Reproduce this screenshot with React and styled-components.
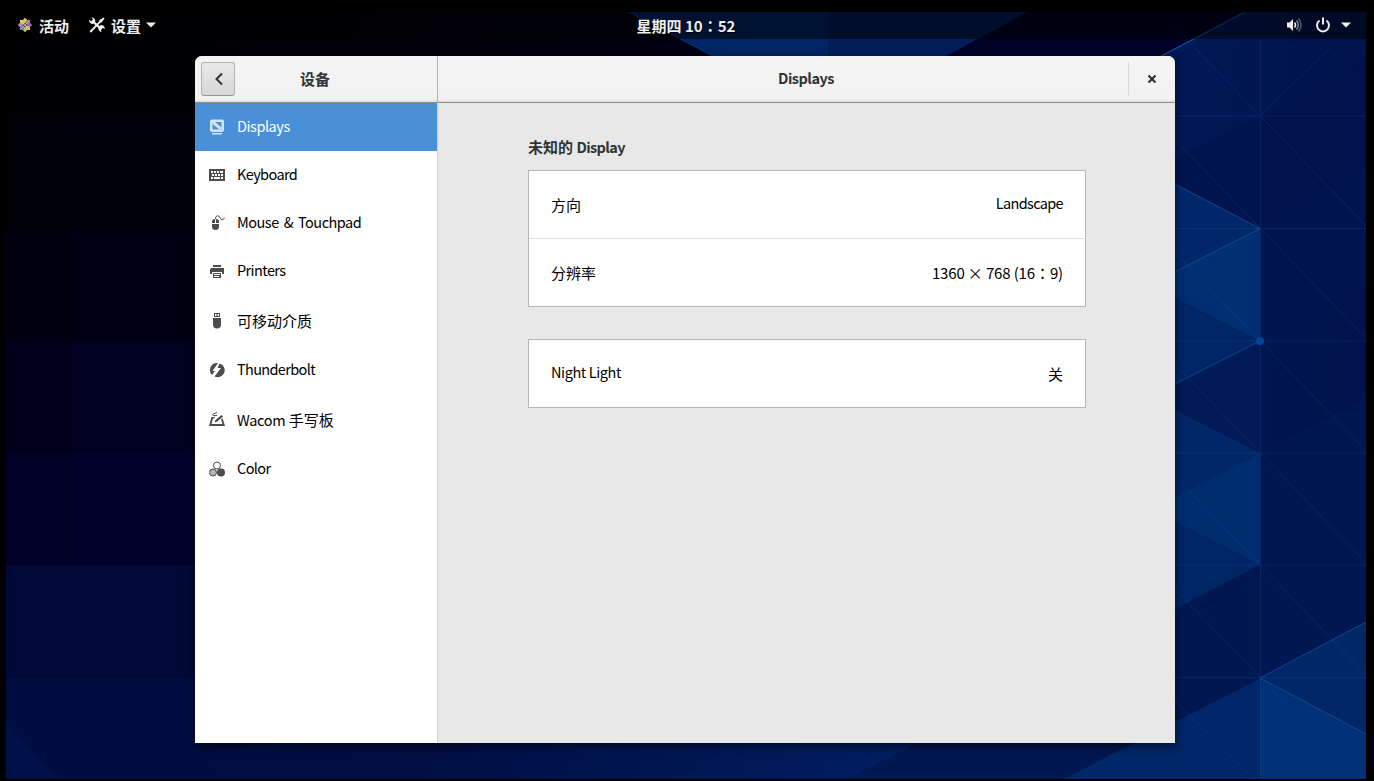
import React, { useState } from 'react';
import styled, { createGlobalStyle } from 'styled-components';

const GlobalStyle = createGlobalStyle`
  body {
    margin: 0;
    background: #000;
    overflow: hidden;
  }
`;

const Screen = styled.div`
  box-sizing: border-box;
  width: 1374px;
  height: 781px;
  padding: 12px 8px 2px 6px;
  background: #000;
  font-family: 'Noto Sans CJK SC', sans-serif;
  font-size: 15px;
  line-height: 22px;
  color: #000;
`;

const Desktop = styled.div`
  position: relative;
  width: 1360px;
  height: 767px;
  overflow: hidden;
`;

const WallpaperSvg = styled.svg`
  position: absolute;
  inset: 0;
  z-index: 0;
`;

const TopBar = styled.header`
  position: relative;
  box-sizing: border-box;
  display: grid;
  grid-template-columns: 1fr auto 1fr;
  align-items: center;
  height: 27px;
  padding: 0 15px 2px 11px;
  background: rgba(0, 0, 0, 0.5);
  color: #eee;
  font-weight: 700;
`;

const BarGroup = styled.div`
  display: flex;
  align-items: center;
  gap: 19px;
`;

const StatusGroup = styled.div`
  display: flex;
  align-items: center;
  justify-content: flex-end;
  gap: 10px;

  svg:first-child {
    margin-right: 3px;
  }
`;

const BarItem = styled.span`
  display: flex;
  align-items: center;
  gap: 6px;

  svg:last-child:not(:first-child) {
    margin: 1px 0 0 -1px;
  }
`;

const BarText = styled.span`
  padding-top: 2px;
`;

const Clock = styled.span`
  padding: 2px 0 0 4px;
  text-shadow: 0 1px 2px #000;
  white-space: pre;
`;

// the TC face centres the full-width colon in its cell
const Colon = styled.span`
  font-family: 'Noto Sans CJK TC', sans-serif;
`;

const Latin = styled.span`
  font-size: 14.5px;
  letter-spacing: ${(p) => p.$spacing || 0}px;
  word-spacing: ${(p) => p.$word || 0}px;
`;

const Window = styled.main`
  position: relative;
  display: grid;
  grid-template-columns: 243px 1fr;
  grid-template-rows: 47px 1fr;
  width: 980px;
  height: 687px;
  margin: 17px 0 0 189px;
  border-radius: 7px 7px 0 0;
  background: #e8e8e8;
  box-shadow: 0 3px 9px 1px rgba(0, 0, 0, 0.5);
`;

const HeaderPart = styled.div`
  box-sizing: border-box;
  display: grid;
  grid-template-columns: ${(p) => p.$columns};
  align-items: center;
  padding: 0 ${(p) => p.$right || 0}px 1px ${(p) => p.$left || 0}px;
  border-bottom: 1px solid #8f9088;
  border-right: ${(p) => (p.$divided ? '1px solid #b3b3ad' : 'none')};
  border-radius: ${(p) => (p.$divided ? '7px 0 0 0' : '0 7px 0 0')};
  background: linear-gradient(#f4f4f4, #f2f2f2 43px, #dededc);
`;

const Title = styled.h1`
  margin: 0;
  padding-bottom: ${(p) => (p.$latin ? 2 : 0)}px;
  font-size: 15px;
  font-weight: 700;
  color: #2e3436;
  text-align: center;
`;

const BackButton = styled.button`
  display: flex;
  align-items: center;
  justify-content: center;
  width: 34px;
  height: 34px;
  padding: 0 0 0 1px;
  border: 1px solid #b2b2ae;
  border-bottom-color: #96968f;
  border-radius: 3px;
  background: linear-gradient(#e9e9e9, #d7d7d7);
`;

const CloseButton = styled.button`
  display: flex;
  align-items: center;
  justify-content: center;
  height: 34px;
  padding: 0;
  border: 0;
  border-left: 1px solid #dadada;
  background: none;
`;

const Sidebar = styled.nav`
  border-right: 1px solid #d0d0cd;
  background: #fff;
`;

const SidebarRow = styled.div`
  box-sizing: border-box;
  display: flex;
  align-items: center;
  gap: 12px;
  height: ${(p) => (p.$tall ? 51 : 48)}px;
  padding-left: 14px;
  background: ${(p) => (p.$active ? '#4a90d9' : 'transparent')};
  color: ${(p) => (p.$active ? '#fff' : '#000')};
  cursor: default;

  svg {
    color: ${(p) => (p.$active ? '#d3e5f7' : '#4b4d4d')};
  }
`;

const RowLabel = styled.span`
  padding-bottom: ${(p) => (p.$tall ? 0 : 2)}px;
  white-space: nowrap;
`;

const Content = styled.section`
  display: flex;
  flex-direction: column;
  padding: 33px 89px 0 90px;
`;

const SectionTitle = styled.h2`
  margin: 0 0 12px;
  font-size: 15px;
  font-weight: 700;
  line-height: 22px;
  color: #2e3436;
`;

const Card = styled.div`
  border: 1px solid #b6b6b3;
  background: #fff;

  & + & {
    margin-top: 32px;
  }
`;

const CardRow = styled.div`
  box-sizing: border-box;
  display: flex;
  align-items: center;
  justify-content: space-between;
  height: 67px;
  padding: 0 22px;

  & + & {
    height: 68px;
    border-top: 1px solid #e0e0e0;
  }
`;

const CardText = styled.span`
  padding-bottom: ${(p) => (p.$cjk ? 0 : 4)}px;
  letter-spacing: ${(p) => p.$spacing || 0}px;
  white-space: pre;
`;

const Icon = ({ children, ...rest }) => (
  <svg width="16" height="16" viewBox="0 0 16 16" fill="currentColor" {...rest}>
    {children}
  </svg>
);

const DisplayIcon = () => (
  <Icon>
    <path fillRule="evenodd" d="M3 .5h10a2 2 0 0 1 2 2V11a2 2 0 0 1-2 2H3a2 2 0 0 1-2-2V2.500a2 2 0 0 1 2-2zM3.500 3v7.500h9V3z" />
    <path d="M3.500 3h2.500l6.500 5.500v2h-2L3.500 5z" />
    <path d="M3 14h10v1.500H3z" />
  </Icon>
);

const KeyboardIcon = () => (
  <Icon shapeRendering="crispEdges">
    <path
      fillRule="evenodd"
      d="M0 2h16v12H0zM2 4v2h2V4zM5 4v2h2V4zM8 4v2h2V4zM11 4v2h3V4zM3 7v2h2V7zM6 7v2h2V7zM9 7v2h2V7zM12 7v2h2V7zM2 10v2h2v-2zM5 10v2h6v-2zM12 10v2h2v-2z"
    />
  </Icon>
);

const MouseIcon = () => (
  <Icon>
    <path d="M3 8V6.500Q3 4 6 4v4zM7 4q3 0 3 2.500V8H7zM3 9h7v2.500a3.500 3.500 0 0 1-7 0z" />
    <path d="M6.500 4C6.500 1 8 .8 9 .8c2 0 2 4 4 4 1.500 0 2-1 2.500-2" fill="none" stroke="currentColor" />
  </Icon>
);

const PrinterIcon = () => (
  <Icon shapeRendering="crispEdges">
    <path d="M4 2h8v2H4zM2 5h12l1 1v5h-2V9H3v2H1V6z" />
    <path fillRule="evenodd" d="M4 10h8v5H4zM5 11v1h6v-1zM5 13v1h5v-1z" />
  </Icon>
);

const UsbIcon = () => (
  <Icon>
    <path fillRule="evenodd" d="M5 0h6v4H5zM6 1v2h1.500V1zM8.500 1v2H10V1z" />
    <path d="M4 5h8v6.500a4 4 0 0 1-8 0z" />
  </Icon>
);

const ThunderboltIcon = () => (
  <Icon>
    <path d="M8 1a7 7 0 0 0-5 11.900L6 9H3.500L9 1.100zM10.500 1.500L8.500 6H12l-6.500 8.500A7 7 0 1 0 10.500 1.500z" />
  </Icon>
);

const TabletIcon = () => (
  <Icon>
    <path d="M2.500 5H6L5 6.500H4L2.500 12h11L12 7.500l1.500-1.500L16 14H0z" />
    <path d="M5.500 10.500l1-2.500L12.500 3l1.500 1.500-6 5.200z" />
    <path d="M8 .5Q3 2 3.500 3T8 3.500" fill="none" stroke="currentColor" />
  </Icon>
);

const ColorIcon = () => (
  <Icon>
    <circle cx="8" cy="4.500" r="3.500" fill="#fff" stroke="currentColor" />
    <circle cx="4" cy="11.500" r="3.500" fill="#b4b4b4" stroke="currentColor" />
    <circle cx="12" cy="11.500" r="4" />
  </Icon>
);

const CentosIcon = () => (
  <svg width="16" height="16" viewBox="0 0 16 16">
    <path d="M3 3h4.600v4.600H3z" fill="#b6cf54" />
    <path d="M8.400 3H13v4.600H8.400z" fill="#a66aa6" />
    <path d="M3 8.400h4.600V13H3z" fill="#6873b8" />
    <path d="M8.400 8.400H13V13H8.400z" fill="#edb04c" />
    <path d="M8 .8l2 2-2 4-2-4z" fill="#e9c65c" />
    <path d="M15.200 8l-2 2-4-2 4-2z" fill="#8d75b5" />
    <path d="M8 15.200l-2-2 2-4 2 4z" fill="#b5c957" />
    <path d="M.8 8l2-2 4 2-4 2z" fill="#c283ad" />
    <path d="M3 3l10 10M13 3L3 13" stroke="#e5dfd3" strokeWidth=".6" />
  </svg>
);

const ToolsIcon = () => (
  <svg width="17" height="18" viewBox="0 0 17 18">
    <path d="M15.500 1.500l1 1-3 4-1.500.5-7 7.500-2 2.200-1.500-1.500 2-2L11 5.500l.5-1.500z" fill="#eee" />
    <path d="M4 4.500l9.500 9" stroke="#eee" strokeWidth="2.400" />
    <path d="M3.500 1.200a4 4 0 0 1 3.700 4.900L5 8A4 4 0 0 1 1 3.500l2.200 2 2-1.500z" fill="#eee" />
    <path d="M10.500 11l2.300-2a4 4 0 0 1 4 4l-2-1-2 1.500.8 2.700a4 4 0 0 1-3.100-5.200z" fill="#eee" />
  </svg>
);

const VolumeIcon = () => (
  <svg width="16" height="16" viewBox="0 0 16 16">
    <path d="M1 5.500h2.500L7 2v12l-3.500-3.500H1z" fill="#eee" />
    <g fill="none" stroke="#eee" strokeWidth="1.500">
      <path d="M8.500 5.500q2 2.500 0 5" />
      <path d="M10.500 3.500q3.500 4.500 0 9" opacity=".55" />
      <path d="M12.500 1.500q5 6.500 0 13" opacity=".35" />
    </g>
  </svg>
);

const PowerIcon = () => (
  <svg width="16" height="16" viewBox="0 0 16 16" fill="none" stroke="#eee" strokeWidth="2">
    <path d="M4.600 3.500a6 6 0 1 0 6.800 0M8 .5v7" />
  </svg>
);

const Caret = () => (
  <svg width="10" height="6" viewBox="0 0 10 6">
    <path d="M0 .5h10L5 5.500z" fill="#eee" />
  </svg>
);

const gridRows = [116, 228.5, 341, 453, 565, 677.5];

const leftTiles = [
  { y: 12, h: 104, fill: '#000004' },
  { y: 116, h: 112, fill: '#00000b' },
  { y: 228, h: 113, fill: '#000014' },
  { y: 341, h: 112, fill: '#000021' },
  { y: 453, h: 112, fill: '#00022c' },
  { y: 565, h: 113, fill: '#000936' },
  { y: 678, h: 101, fill: '#000d40' },
];

// coordinates are those of the full 1374x781 screen
const Wallpaper = () => (
  <WallpaperSvg width="1360" height="767" viewBox="6 12 1360 767">
    <defs>
      <linearGradient id="floor" x1="0" x2="1">
        <stop offset="0" stopColor="#000d40" />
        <stop offset=".25" stopColor="#000e43" />
        <stop offset="1" stopColor="#00236a" />
      </linearGradient>
      <linearGradient id="sky" x1="0" x2="1">
        <stop offset="0" stopColor="#000004" />
        <stop offset="1" stopColor="#000025" />
      </linearGradient>
      <linearGradient id="side" x1="0" x2="1" y2=".1">
        <stop offset="0" stopColor="#001a58" />
        <stop offset="1" stopColor="#00134c" />
      </linearGradient>
    </defs>
    {leftTiles.map((t) => (
      <rect key={t.y} x="6" y={t.y} width="500" height={t.h} fill={t.fill} />
    ))}
    <rect x="6" y="12" width="66" height="553" fill="#000" opacity=".1" />
    <rect x="200" y="12" width="970" height="104" fill="url(#sky)" />
    <rect x="950" y="12" width="300" height="60" fill="#000026" />
    <rect x="200" y="678" width="860" height="101" fill="url(#floor)" />
    <path d="M6 722L57 779H6z" fill="#001149" />
    <path d="M629 12h199v60h-85z" fill="#002565" />
    <path d="M828 12h199l-110 60h-89z" fill="#001d59" />
    <path d="M629 12l114 60" stroke="#17468a" opacity=".7" />
    <path d="M1245 12h121v666h-218V63z" fill="url(#side)" />
    <path d="M1245 12L1148 63" stroke="#1b4d94" strokeWidth="1.200" />

    <path d="M1175 159l85-43v112l-85-44z" fill="#00154f" />
    <path d="M1260 116l106-56v112l-106 56z" fill="#00134c" />
    <path d="M1260 341l106-56v-113l-106 56z" fill="#00154f" />
    <path d="M1260 453l106-56v168h-106z" fill="#001752" />
    <path d="M1175 384l85-43v112l-85-43z" fill="#001a58" />
    <path d="M1260 565h106v57l-106 56-197 101H848z" fill="#001752" />
    <path d="M1260 565v113H1040z" fill="#001752" />

    <path d="M1175 184l85 44.500-85 43.500z" fill="#00276a" />
    <path d="M1175 272l85-43.500V341l-85-43z" fill="#002e73" />
    <path d="M1175 298l85 43-85 43z" fill="#002565" />
    <path d="M1175 410l85 43-85 44z" fill="#002767" />
    <path d="M1175 497l85-44v112l-85-43z" fill="#002d70" />
    <path d="M1175 522l85 43-85 44z" fill="#002565" />
    <path d="M1260 678v101h-197z" fill="#002769" />
    <path d="M1260 678l106-56v112z" fill="#002868" />
    <path d="M1260 678l106 56v45h-106z" fill="#003076" />

    <g stroke="#2a69b5" strokeWidth="1" opacity=".18" fill="none">
      {gridRows.map((y) => (
        <path key={y} d={`M1175 ${y}H1366M1172 ${y - 92}L1366 ${y + 110}`} />
      ))}
      <path d="M1260.500 40v739M1172 698l82 81M1260 116l70-68" />
    </g>
    <g stroke="#1f5ba6" fill="none" opacity=".65">
      <path d="M1175 184l85 44.500-85 43.500M1260 341l-85 43" />
      <path d="M1366 622l-106 56 106 56" />
    </g>
    <circle cx="1260" cy="341" r="4" fill="#064593" />
  </WallpaperSvg>
);

const panels = [
  { name: 'Displays', icon: DisplayIcon, spacing: -0.45 },
  { name: 'Keyboard', icon: KeyboardIcon, spacing: -0.6 },
  { name: 'Mouse & Touchpad', icon: MouseIcon, spacing: -0.5, word: 2.2 },
  { name: 'Printers', icon: PrinterIcon, spacing: -0.6 },
  { name: '可移动介质', icon: UsbIcon, tall: true },
  { name: 'Thunderbolt', icon: ThunderboltIcon, spacing: -0.65 },
  { name: 'Wacom', cjk: '手写板', icon: TabletIcon, tall: true, spacing: -0.3 },
  { name: 'Color', icon: ColorIcon, spacing: -0.6 },
];

function App() {
  const [active, setActive] = useState('Displays');

  return (
    <Screen>
      <GlobalStyle />
      <Desktop>
        <Wallpaper />
        <TopBar>
          <BarGroup>
            <BarItem>
              <CentosIcon />
              <BarText>活动</BarText>
            </BarItem>
            <BarItem>
              <ToolsIcon />
              <BarText>设置</BarText>
              <Caret />
            </BarItem>
          </BarGroup>
          <Clock>
            星期四 10<Colon>：</Colon>52
          </Clock>
          <StatusGroup>
            <VolumeIcon />
            <PowerIcon />
            <Caret />
          </StatusGroup>
        </TopBar>
        <Window>
          <HeaderPart $columns="34px 1fr" $left={6} $right={42} $divided>
            <BackButton aria-label="back">
              <svg width="16" height="16" viewBox="0 0 16 16" fill="none" stroke="#2e3436" strokeWidth="2">
                <path d="M11 2.500L5.500 8l5.500 5.500" />
              </svg>
            </BackButton>
            <Title>设备</Title>
          </HeaderPart>
          <HeaderPart $columns="1fr 47px" $left={46}>
            <Title $latin>
              <Latin $spacing={-0.5}>Displays</Latin>
            </Title>
            <CloseButton aria-label="close">
              <svg width="16" height="16" viewBox="0 0 16 16" stroke="#2e3436" strokeWidth="2.200">
                <path d="M4.500 4.500l7 7M11.500 4.500l-7 7" />
              </svg>
            </CloseButton>
          </HeaderPart>
          <Sidebar>
            {panels.map(({ name, cjk, icon: PanelIcon, tall, spacing, word }) => (
              <SidebarRow key={name} $tall={tall} $active={name === active} onClick={() => setActive(name)}>
                <PanelIcon />
                <RowLabel $tall={tall}>
                  {spacing ? (
                    <Latin $spacing={spacing} $word={word}>
                      {name}
                    </Latin>
                  ) : (
                    name
                  )}
                  {cjk && ` ${cjk}`}
                </RowLabel>
              </SidebarRow>
            ))}
          </Sidebar>
          <Content>
            <SectionTitle>
              未知的 <Latin $spacing={-0.6}>Display</Latin>
            </SectionTitle>
            <Card>
              <CardRow>
                <CardText $cjk>方向</CardText>
                <CardText>
                  <Latin $spacing={-0.65}>Landscape</Latin>
                </CardText>
              </CardRow>
              <CardRow>
                <CardText $cjk>分辨率</CardText>
                <CardText $cjk $spacing={-0.14}>
                  1360 × 768 (16<Colon>：</Colon>9)
                </CardText>
              </CardRow>
            </Card>
            <Card>
              <CardRow>
                <CardText>
                  <Latin $spacing={-0.4}>Night Light</Latin>
                </CardText>
                <CardText $cjk>关</CardText>
              </CardRow>
            </Card>
          </Content>
        </Window>
      </Desktop>
    </Screen>
  );
}

export default App;
